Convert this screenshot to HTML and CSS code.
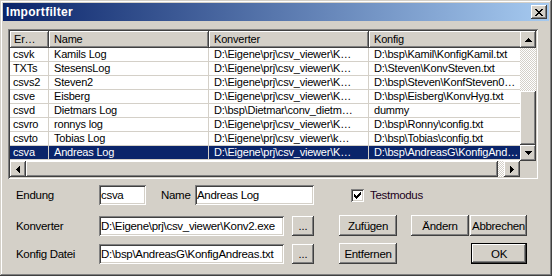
FILE: index.html
```html
<!DOCTYPE html>
<html>
<head>
<meta charset="utf-8">
<link rel="stylesheet" href="styles.css">
</head>
<body>
<div class="window">
  <div class="titlebar">
    <span class="title">Importfilter</span>
    <span class="close"><svg width="8" height="7" viewBox="0 0 8 7"><path d="M0 0h2v1H0zM6 0h2v1H6zM1 1h2v1H1zM5 1h2v1H5zM2 2h4v1H2zM3 3h2v1H3zM2 4h4v1H2zM1 5h2v1H1zM5 5h2v1H5zM0 6h2v1H0zM6 6h2v1H6z" fill="#000"/></svg></span>
  </div>
  <div class="content">
    <div class="listview">
      <div class="table">
        <div class="cols header">
          <div class="hcell first">Er…</div>
          <div class="hcell">Name</div>
          <div class="hcell">Konverter</div>
          <div class="hcell">Konfig</div>
        </div>
        <div class="cols row">
          <div class="cell first">csvk</div><div class="cell">Kamils Log</div><div class="cell">D:\Eigene\prj\csv_viewer\K…</div><div class="cell">D:\bsp\Kamil\KonfigKamil.txt</div>
        </div>
        <div class="cols row">
          <div class="cell first">TXTs</div><div class="cell">StesensLog</div><div class="cell">D:\Eigene\prj\csv_viewer\K…</div><div class="cell">D:\Steven\KonvSteven.txt</div>
        </div>
        <div class="cols row">
          <div class="cell first">csvs2</div><div class="cell">Steven2</div><div class="cell">D:\Eigene\prj\csv_viewer\K…</div><div class="cell">D:\bsp\Steven\KonfSteven0…</div>
        </div>
        <div class="cols row">
          <div class="cell first">csve</div><div class="cell">Eisberg</div><div class="cell">D:\Eigene\prj\csv_viewer\K…</div><div class="cell">D:\bsp\Eisberg\KonvHyg.txt</div>
        </div>
        <div class="cols row">
          <div class="cell first">csvd</div><div class="cell">Dietmars Log</div><div class="cell">D:\bsp\Dietmar\conv_dietm…</div><div class="cell">dummy</div>
        </div>
        <div class="cols row">
          <div class="cell first">csvro</div><div class="cell">ronnys log</div><div class="cell">D:\Eigene\prj\csv_viewer\K…</div><div class="cell">D:\bsp\Ronny\config.txt</div>
        </div>
        <div class="cols row">
          <div class="cell first">csvto</div><div class="cell">Tobias Log</div><div class="cell">D:\Eigene\prj\csv_viewer\k…</div><div class="cell">D:\bsp\Tobias\config.txt</div>
        </div>
        <div class="cols row selected">
          <div class="cell first">csva</div><div class="cell">Andreas Log</div><div class="cell">D:\Eigene\prj\csv_viewer\K…</div><div class="cell">D:\bsp\AndreasG\KonfigAnd…</div>
        </div>
      </div>
      <div class="vscroll">
        <div class="sbtn up"><svg width="7" height="4" viewBox="0 0 7 4"><path d="M3 0h1v1H3zM2 1h3v1H2zM1 2h5v1H1zM0 3h7v1H0z" fill="#000"/></svg></div>
        <div class="track vtrack"></div>
        <div class="thumb vthumb"></div>
        <div class="sbtn"><svg width="7" height="4" viewBox="0 0 7 4"><path d="M0 0h7v1H0zM1 1h5v1H1zM2 2h3v1H2zM3 3h1v1H3z" fill="#000"/></svg></div>
      </div>
      <div class="hscroll">
        <div class="sbtn"><svg width="4" height="7" viewBox="0 0 4 7"><path d="M0 3h1v1H0zM1 2h1v3H1zM2 1h1v5H2zM3 0h1v7H3z" fill="#000"/></svg></div>
        <div class="thumb hthumb"></div>
        <div class="track htrack"></div>
        <div class="sbtn"><svg width="4" height="7" viewBox="0 0 4 7"><path d="M0 0h1v7H0zM1 1h1v5H1zM2 2h1v3H2zM3 3h1v1H3z" fill="#000"/></svg></div>
      </div>
      <div class="corner"></div>
    </div>

    <div class="form">
      <div class="frow r1">
        <span class="label">Endung</span>
        <div class="field short">csva</div>
        <span class="label name">Name</span>
        <div class="field namef">Andreas Log</div>
        <span class="check"><svg width="7" height="7" viewBox="0 0 7 7"><path d="M6 0h1v3H6zM5 1h1v3H5zM4 2h1v3H4zM3 3h1v3H3zM2 4h1v3H2zM1 3h1v3H1zM0 2h1v3H0z" fill="#000"/></svg></span>
        <span class="checklabel">Testmodus</span>
      </div>
      <div class="frow r2">
        <span class="label">Konverter</span>
        <div class="field long">D:\Eigene\prj\csv_viewer\Konv2.exe</div>
        <div class="btn dots">...</div>
        <div class="btn act">Zufügen</div>
        <div class="btn act aendern">Ändern</div>
        <div class="btn abbr">Abbrechen</div>
      </div>
      <div class="frow r3">
        <span class="label">Konfig Datei</span>
        <div class="field long">D:\bsp\AndreasG\KonfigAndreas.txt</div>
        <div class="btn dots">...</div>
        <div class="btn act">Entfernen</div>
        <div class="btn ok">OK</div>
      </div>
    </div>
  </div>
</div>
</body>
</html>
```

FILE: styles.css
```css
* { box-sizing: border-box; }
body {
  margin: 0;
  background: #d4d0c8;
  font-family: "Liberation Sans", Arial, sans-serif;
}
.window {
  width: 552px;
  height: 276px;
  padding: 3px;
  background: #d4d0c8;
  box-shadow: inset -1px -1px #404040, inset 1px 1px #d4d0c8, inset -2px -2px #808080, inset 2px 2px #fff;
}
.titlebar {
  height: 18px;
  display: flex;
  align-items: center;
  justify-content: space-between;
  padding: 0 2px 0 3px;
  background: linear-gradient(to right, #0a246a, #a6caf0);
}
.title {
  color: #fff;
  font: bold 12px "Liberation Sans", Arial, sans-serif;
  letter-spacing: 0.3px;
}
.close, .sbtn {
  display: flex;
  align-items: center;
  justify-content: center;
  background: #d4d0c8;
  box-shadow: inset -1px -1px #404040, inset 1px 1px #fff, inset -2px -2px #808080, inset 2px 2px #d4d0c8;
}
.close { width: 16px; height: 14px; }
.close svg, .sbtn svg { display: block; }

.content { padding: 8px 0 0 5px; }

.listview {
  width: 530px;
  height: 150px;
  padding: 2px;
  background: #fff;
  box-shadow: inset 1px 1px #808080, inset -1px -1px #fff, inset 2px 2px #404040, inset -2px -2px #d4d0c8;
  display: grid;
  grid-template-columns: 1fr 16px;
  grid-template-rows: 1fr 16px;
}
.table {
  overflow: hidden;
  font-size: 11px;
  letter-spacing: -0.2px;
  color: #000;
}
.cols {
  display: grid;
  grid-template-columns: 39px 160px 160px 160px;
}
.hcell {
  height: 17px;
  line-height: 17px;
  padding-left: 5px;
  background: #d4d0c8;
  box-shadow: inset -1px -1px #404040, inset 1px 1px #fff, inset -2px -2px #808080;
  white-space: nowrap;
  overflow: hidden;
}
.hcell.first { padding-left: 4px; }
.cell {
  height: 14px;
  line-height: 13px;
  padding-left: 5px;
  border-right: 1px solid #d4d0c8;
  border-bottom: 1px solid #d4d0c8;
  white-space: nowrap;
  overflow: hidden;
}
.cell.first { padding-left: 3px; }
.row.selected { background: #0a246a; color: #fff; }

.vscroll { display: flex; flex-direction: column; }
.vscroll .sbtn { width: 16px; height: 16px; }
.vscroll .up { height: 17px; }
.track {
  background: repeating-conic-gradient(#fff 0 25%, #d4d0c8 0 50%) 0 0 / 2px 2px;
}
.vtrack { height: 43px; }
.thumb {
  background: #d4d0c8;
  box-shadow: inset -1px -1px #404040, inset 1px 1px #fff, inset -2px -2px #808080, inset 2px 2px #d4d0c8;
}
.vthumb { flex: 1; }
.hscroll { display: flex; }
.hscroll .sbtn { width: 16px; height: 16px; }
.hthumb { flex: 1; }
.htrack { width: 6px; }
.corner { background: #d4d0c8; }

.form {
  margin-top: 6px;
  padding-left: 8px;
  font-family: "Liberation Sans", Arial, sans-serif;
  font-size: 11.5px;
  letter-spacing: -0.3px;
  color: #000;
}
.frow { display: flex; align-items: center; height: 21px; }
.r1 { height: 20px; }
.r2 { margin-top: 10px; }
.r3 { margin-top: 7px; }
.label { width: 83px; flex: none; }
.label.name { width: 34px; margin-left: 15px; }
.field {
  flex: none;
  height: 20px;
  line-height: 20px;
  padding-left: 2px;
  background: #fff;
  box-shadow: inset 1px 1px #808080, inset -1px -1px #fff, inset 2px 2px #404040, inset -2px -2px #d4d0c8;
  white-space: nowrap;
  overflow: hidden;
}
.field.short { width: 47px; }
.field.namef { width: 119px; }
.field.long { width: 185px; }
.check {
  flex: none;
  width: 13px;
  height: 13px;
  margin-left: 37px;
  display: flex;
  align-items: center;
  justify-content: center;
  background: #fff;
  box-shadow: inset 1px 1px #808080, inset -1px -1px #fff, inset 2px 2px #404040, inset -2px -2px #d4d0c8;
}
.checklabel { margin-left: 6px; color: #200020; }
.btn {
  flex: none;
  height: 21px;
  display: flex;
  align-items: center;
  justify-content: center;
  background: #d4d0c8;
  box-shadow: inset -1px -1px #404040, inset 1px 1px #fff, inset -2px -2px #808080, inset 2px 2px #d4d0c8;
  white-space: nowrap;
}
.btn.dots { width: 22px; height: 20px; margin-left: 8px; align-items: flex-end; padding-bottom: 4px; font-size: 11px; letter-spacing: 0; }
.btn.act { width: 58px; margin-left: 25px; }
.btn.aendern { margin-left: 14px; }
.btn.abbr { width: 57px; margin-left: 1px; }
.btn.ok {
  width: 56px;
  margin-left: 74px;
  box-shadow: inset 0 0 0 1px #000, inset -2px -2px #404040, inset 2px 2px #fff, inset -3px -3px #808080;
}
```
